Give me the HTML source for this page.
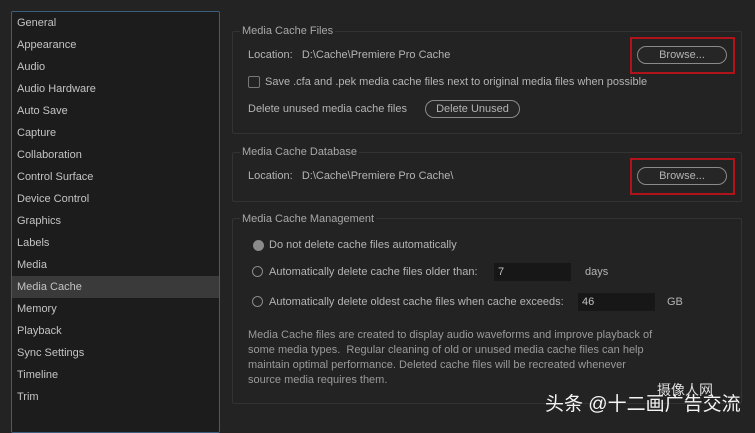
<html><head><style>
body{margin:0;width:755px;height:425px;background:#232323;font-family:"Liberation Sans","Noto Sans CJK SC",sans-serif;font-size:11px;color:#b4b4b4;position:relative;overflow:hidden}
.a{position:absolute;white-space:nowrap}
#side{position:absolute;left:11px;top:11px;width:207px;height:420px;background:#1c1c1c;border:1px solid #3d5d7d;border-radius:2px}
#side div{height:22px;line-height:22px;padding-left:5px;color:#c4c4c4}
#side .sel{background:#3a3a3a}
.grp{position:absolute;border:1px solid #333;border-radius:2px}
.lg{position:absolute;background:#232323;padding:0 2px;color:#a8a8a8}
.btn{position:absolute;border:1px solid #8a8a8a;border-radius:10px;text-align:center;line-height:16px;height:16px;color:#b4b4b4;background:#262626}
.red{position:absolute;border:2px solid #b0131a}
.inp{position:absolute;background:#171717;height:18px;line-height:18px;padding-left:4px;color:#c0c0c0}
.rad{position:absolute;width:9px;height:9px;border:1.5px solid #8a8a8a;border-radius:50%}
</style></head><body>
<div id="side">
<div>General</div><div>Appearance</div><div>Audio</div><div>Audio Hardware</div><div>Auto Save</div><div>Capture</div><div>Collaboration</div><div>Control Surface</div><div>Device Control</div><div>Graphics</div><div>Labels</div><div>Media</div><div class="sel">Media Cache</div><div>Memory</div><div>Playback</div><div>Sync Settings</div><div>Timeline</div><div>Trim</div>
</div>

<div class="grp" style="left:232px;top:31px;width:508px;height:101px"></div>
<div class="lg a" style="left:240px;top:25px">Media Cache Files</div>
<div class="a" style="left:248px;top:49px">Location:&nbsp;&nbsp; D:\Cache\Premiere Pro Cache</div>
<div class="red" style="left:630px;top:37px;width:101px;height:33px"></div>
<div class="btn" style="left:637px;top:46px;width:88px">Browse...</div>
<div class="a" style="left:248px;top:76px;width:10px;height:10px;border:1.5px solid #777;border-radius:2px"></div>
<div class="a" style="left:265px;top:76px">Save .cfa and .pek media cache files next to original media files when possible</div>
<div class="a" style="left:248px;top:103px">Delete unused media cache files</div>
<div class="btn" style="left:425px;top:100px;width:93px">Delete Unused</div>

<div class="grp" style="left:232px;top:152px;width:508px;height:48px"></div>
<div class="lg a" style="left:240px;top:146px">Media Cache Database</div>
<div class="a" style="left:248px;top:170px">Location:&nbsp;&nbsp; D:\Cache\Premiere Pro Cache\</div>
<div class="red" style="left:630px;top:158px;width:101px;height:33px"></div>
<div class="btn" style="left:637px;top:167px;width:88px">Browse...</div>

<div class="grp" style="left:232px;top:218px;width:508px;height:184px"></div>
<div class="lg a" style="left:240px;top:213px">Media Cache Management</div>
<div class="a" style="left:253px;top:240px;width:11px;height:11px;border-radius:50%;background:#8a8a8a"></div>
<div class="a" style="left:269px;top:239px">Do not delete cache files automatically</div>
<div class="rad" style="left:252px;top:266px"></div>
<div class="a" style="left:269px;top:266px">Automatically delete cache files older than:</div>
<div class="inp" style="left:494px;top:263px;width:73px">7</div>
<div class="a" style="left:585px;top:266px">days</div>
<div class="rad" style="left:252px;top:296px"></div>
<div class="a" style="left:269px;top:296px">Automatically delete oldest cache files when cache exceeds:</div>
<div class="inp" style="left:578px;top:293px;width:73px">46</div>
<div class="a" style="left:667px;top:296px">GB</div>
<div class="a" style="left:248px;top:328px;line-height:15px;color:#9a9a9a">Media Cache files are created to display audio waveforms and improve playback of<br>some media types.&nbsp; Regular cleaning of old or unused media cache files can help<br>maintain optimal performance. Deleted cache files will be recreated whenever<br>source media requires them.</div>
<div class="a" style="left:657px;top:380px;font-size:14px;color:#ddd">摄像人网</div>
<div class="a" style="left:545px;top:389px;font-size:19px;color:#f4f4f4">头条 @十二画广告交流</div>
</body></html>
